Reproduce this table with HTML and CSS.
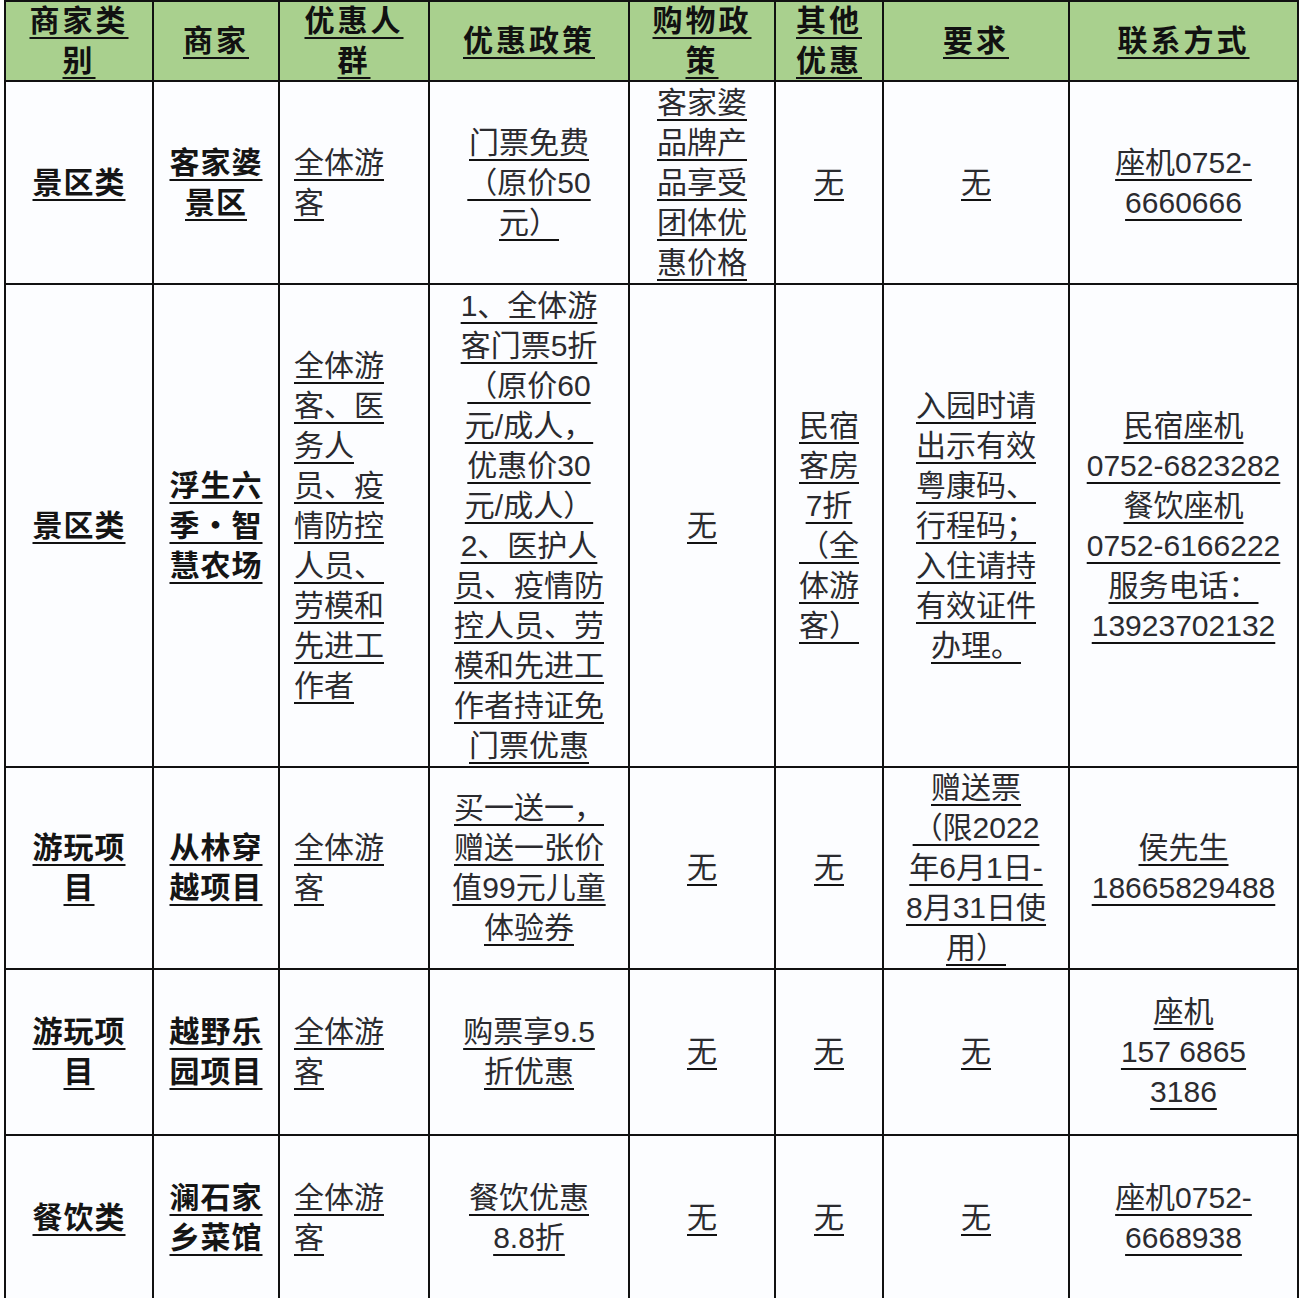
FILE: index.html
```html
<!DOCTYPE html>
<html lang="zh-CN">
<head>
<meta charset="utf-8">
<title>商家优惠表</title>
<link rel="stylesheet" href="styles.css">
</head>
<body>
<div class="sheet">
  <div class="cell head"><span class="t">商家类<br>别</span></div>
  <div class="cell head"><span class="t">商家</span></div>
  <div class="cell head"><span class="t">优惠人<br>群</span></div>
  <div class="cell head"><span class="t">优惠政策</span></div>
  <div class="cell head"><span class="t">购物政<br>策</span></div>
  <div class="cell head"><span class="t">其他<br>优惠</span></div>
  <div class="cell head"><span class="t">要求</span></div>
  <div class="cell head"><span class="t">联系方式</span></div>

  <div class="cell strong"><span class="t">景区类</span></div>
  <div class="cell strong"><span class="t">客家婆<br>景区</span></div>
  <div class="cell left"><span class="t">全体游<br>客</span></div>
  <div class="cell"><span class="t">门票免费<br>（原价50<br>元）</span></div>
  <div class="cell"><span class="t">客家婆<br>品牌产<br>品享受<br>团体优<br>惠价格</span></div>
  <div class="cell"><span class="t">无</span></div>
  <div class="cell"><span class="t">无</span></div>
  <div class="cell"><span class="t">座机0752-<br>6660666</span></div>

  <div class="cell strong"><span class="t">景区类</span></div>
  <div class="cell strong"><span class="t">浮生六<br>季・智<br>慧农场</span></div>
  <div class="cell left"><span class="t">全体游<br>客、医<br>务人<br>员、疫<br>情防控<br>人员、<br>劳模和<br>先进工<br>作者</span></div>
  <div class="cell"><span class="t">1、全体游<br>客门票5折<br>（原价60<br>元/成人，<br>优惠价30<br>元/成人）<br>2、医护人<br>员、疫情防<br>控人员、劳<br>模和先进工<br>作者持证免<br>门票优惠</span></div>
  <div class="cell"><span class="t">无</span></div>
  <div class="cell"><span class="t">民宿<br>客房<br>7折<br>（全<br>体游<br>客）</span></div>
  <div class="cell"><span class="t">入园时请<br>出示有效<br>粤康码、<br>行程码；<br>入住请持<br>有效证件<br>办理。</span></div>
  <div class="cell"><span class="t">民宿座机<br>0752-6823282<br>餐饮座机<br>0752-6166222<br>服务电话：<br>13923702132</span></div>

  <div class="cell strong"><span class="t">游玩项<br>目</span></div>
  <div class="cell strong"><span class="t">从林穿<br>越项目</span></div>
  <div class="cell left"><span class="t">全体游<br>客</span></div>
  <div class="cell"><span class="t">买一送一，<br>赠送一张价<br>值99元儿童<br>体验券</span></div>
  <div class="cell"><span class="t">无</span></div>
  <div class="cell"><span class="t">无</span></div>
  <div class="cell"><span class="t">赠送票<br>（限2022<br>年6月1日-<br>8月31日使<br>用）</span></div>
  <div class="cell"><span class="t">侯先生<br>18665829488</span></div>

  <div class="cell strong"><span class="t">游玩项<br>目</span></div>
  <div class="cell strong"><span class="t">越野乐<br>园项目</span></div>
  <div class="cell left"><span class="t">全体游<br>客</span></div>
  <div class="cell"><span class="t">购票享9.5<br>折优惠</span></div>
  <div class="cell"><span class="t">无</span></div>
  <div class="cell"><span class="t">无</span></div>
  <div class="cell"><span class="t">无</span></div>
  <div class="cell"><span class="t">座机<br>157 6865<br>3186</span></div>

  <div class="cell strong"><span class="t">餐饮类</span></div>
  <div class="cell strong"><span class="t">澜石家<br>乡菜馆</span></div>
  <div class="cell left"><span class="t">全体游<br>客</span></div>
  <div class="cell"><span class="t">餐饮优惠<br>8.8折</span></div>
  <div class="cell"><span class="t">无</span></div>
  <div class="cell"><span class="t">无</span></div>
  <div class="cell"><span class="t">无</span></div>
  <div class="cell"><span class="t">座机0752-<br>6668938</span></div>
</div>
</body>
</html>
```

FILE: styles.css
```css
html, body {
  margin: 0;
  padding: 0;
  background: #ffffff;
  overflow: hidden;
}

body {
  font-family: "Liberation Sans", "Noto Sans CJK SC", sans-serif;
}

.sheet {
  display: grid;
  width: max-content;
  margin-left: 4px;
  grid-template-columns: 146px 124px 148px 198px 144px 106px 184px 227px;
  grid-template-rows: 78px 201px 481px 200px 164px 164px;
  gap: 2px;
  padding: 2px;
  background: #111111;
}

.cell {
  display: flex;
  align-items: center;
  justify-content: center;
  text-align: center;
  background: #fcfdff;
  font-size: 30px;
  line-height: 40px;
  color: #2b2b2f;
  white-space: nowrap;
}

.t {
  text-decoration: underline;
  text-decoration-thickness: 2px;
  text-underline-offset: 6px;
  text-decoration-skip-ink: none;
  text-decoration-color: #111111;
}

.head {
  background: #a9d08e;
  font-weight: 700;
  color: #111111;
  letter-spacing: 3px;
}

.strong {
  font-weight: 700;
  color: #151515;
  letter-spacing: 1px;
}

.left {
  justify-content: flex-start;
  text-align: left;
  padding-left: 14px;
}
```
